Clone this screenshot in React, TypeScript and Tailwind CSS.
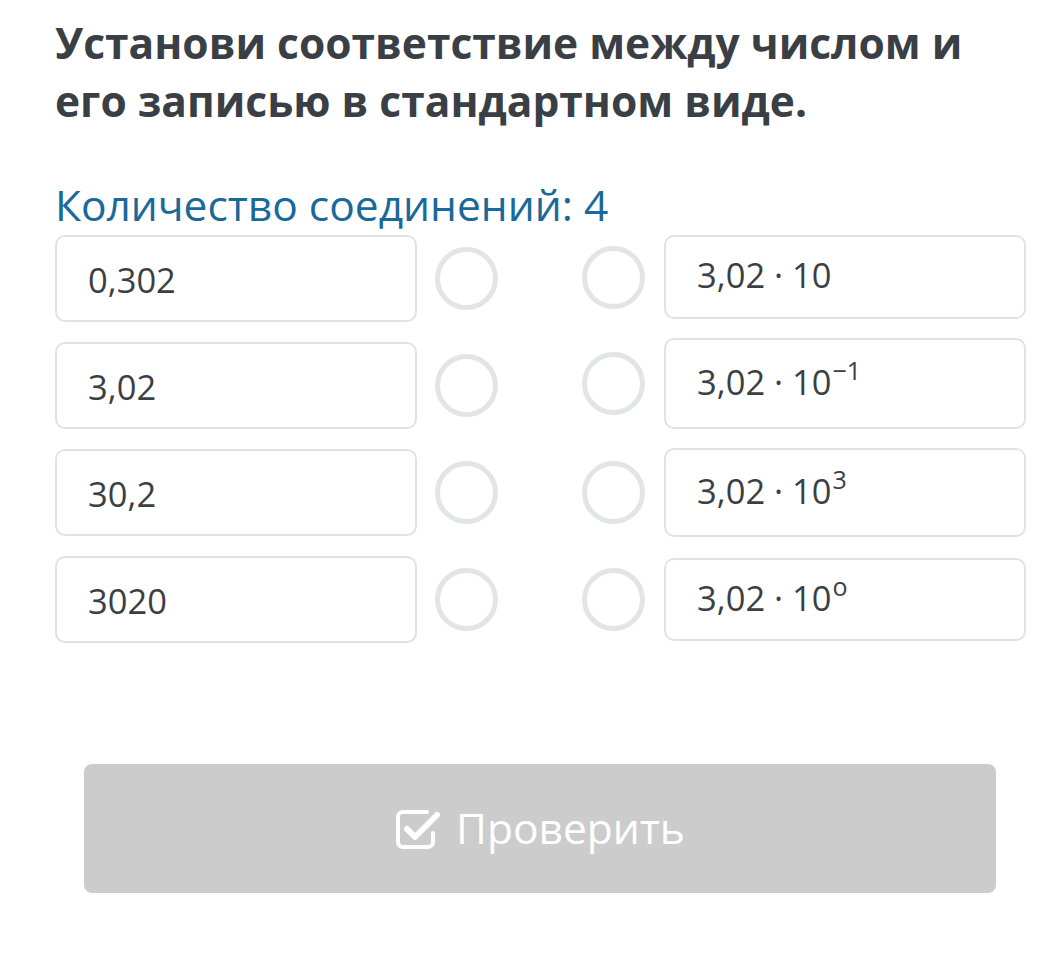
import React from "react";

const font = { fontFamily: '"Open Sans", "Noto Sans", sans-serif' };

function Circle() {
  return <div className="w-[63px] h-[63px] rounded-full border-[5px] border-[#e1e5e8] shrink-0" />;
}

function Sup({ children }: { children: React.ReactNode }) {
  return <span className="text-[25px] relative -top-[15px] ml-[1px]">{children}</span>;
}

const left = ["0,302", "3,02", "30,2", "3020"];

const right: { content: React.ReactNode; h: string }[] = [
  { content: <>3,02 · 10</>, h: "h-[84px]" },
  { content: <>3,02 · 10<Sup>−1</Sup></>, h: "h-[91px]" },
  { content: <>3,02 · 10<Sup>3</Sup></>, h: "h-[89px]" },
  { content: <>3,02 · 10<Sup>o</Sup></>, h: "h-[83px]" },
];

function CheckIcon() {
  return (
    <svg width="48" height="42" viewBox="0 0 48 42" fill="none" className="shrink-0">
      <path
        d="M32 4 H8 a5 5 0 0 0 -5 5 V34 a5 5 0 0 0 5 5 H33 a5 5 0 0 0 5 -5 V25"
        stroke="white"
        strokeWidth="4"
        strokeLinecap="round"
        strokeLinejoin="round"
      />
      <path
        d="M12 21 L20 29 L42 7"
        stroke="white"
        strokeWidth="6"
        strokeLinecap="round"
        strokeLinejoin="round"
      />
    </svg>
  );
}

export default function App() {
  return (
    <div className="w-[1061px] h-[977px] bg-white overflow-hidden" style={font}>
      <div className="pl-[55px] pt-[14px]">
        <h1 className="text-[42.5px] leading-[58px] font-bold text-[#3a3f45]">
          Установи соответствие между числом и
          <br />
          его записью в стандартном виде.
        </h1>
        <div className="mt-[51px] text-[42.5px] leading-[48px] text-[#19699a]">
          Количество соединений: 4
        </div>
        <div className="mt-[6px] flex">
          <div className="flex flex-col gap-[20px]">
            {left.map((t) => (
              <div key={t} className="flex items-center">
                <div className="w-[362px] h-[87px] rounded-[10px] border-2 border-[#e0e3e6] flex items-center pl-[31px] text-[34.5px] text-[#3b3f44] pt-[2px]">
                  {t}
                </div>
                <div className="ml-[18px]">
                  <Circle />
                </div>
              </div>
            ))}
          </div>
          <div className="ml-[84px] flex flex-col gap-[19px]">
            {right.map((r, i) => (
              <div key={i} className={"flex items-center " + (i === 3 ? "mt-[2px]" : "")}>
                <Circle />
                <div
                  className={
                    "ml-[19px] w-[362px] rounded-[10px] border-2 border-[#e0e3e6] flex items-center pl-[31px] text-[34.5px] text-[#3b3f44] " +
                    r.h
                  }
                >
                  <span className="-mt-[4px]">{r.content}</span>
                </div>
              </div>
            ))}
          </div>
        </div>
      </div>
      <div className="mt-[121px] ml-[84px] w-[912px] h-[129px] rounded-[8px] bg-[#cccccc] flex items-center justify-center gap-[13px] text-white text-[42.5px]">
        <CheckIcon />
        <span className="-mt-[2px]">Проверить</span>
      </div>
    </div>
  );
}
